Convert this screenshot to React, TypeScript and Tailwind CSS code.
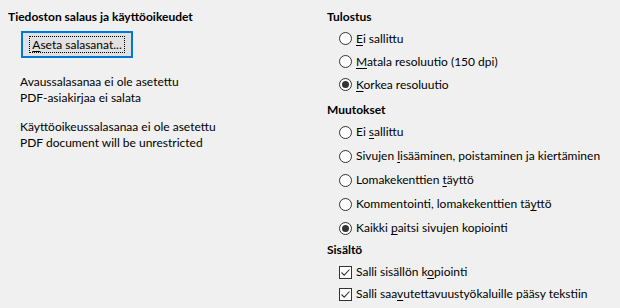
import type { ReactNode } from "react";

const font = { fontFamily: 'Lato, "Segoe UI", Arial, sans-serif' };

function U({ children }: { children: ReactNode }) {
  return <span className="underline underline-offset-2">{children}</span>;
}

function Radio({ checked, children, h = "h-[24px]" }: { checked?: boolean; children: ReactNode; h?: string }) {
  return (
    <div className={`flex items-center ${h} pl-[12px]`}>
      <span className="flex h-[13px] w-[13px] shrink-0 items-center justify-center rounded-full border border-[#333333] bg-white">
        {checked && <span className="h-[7px] w-[7px] rounded-full bg-[#333333]" />}
      </span>
      <span className="ml-[4px] whitespace-nowrap">{children}</span>
    </div>
  );
}

function Check({ children }: { children: ReactNode }) {
  return (
    <div className="flex h-[22px] items-center pl-[12px]">
      <span className="flex h-[13px] w-[13px] shrink-0 items-center justify-center border border-[#333333] bg-white">
        <svg width="11" height="11" viewBox="0 0 11 11">
          <path d="M1.5 5.5 L4.2 8.2 L9.5 2.5" fill="none" stroke="#333333" strokeWidth="1.1" />
        </svg>
      </span>
      <span className="ml-[4px] whitespace-nowrap">{children}</span>
    </div>
  );
}

export default function App() {
  return (
    <div className="h-[308px] w-[620px] overflow-hidden bg-[#f0f0f0] text-[12px] leading-[16px] text-black" style={font}>
      <div className="flex pt-[9px]">
        {/* left: encryption */}
        <div className="w-[327px] shrink-0 pl-[8px]">
          <div className="font-bold">Tiedoston salaus ja käyttöoikeudet</div>
          <div className="ml-[13px] mt-[6px] flex h-[27px] w-[112px] items-center justify-center border-2 border-[#0078d7] bg-[#e1e1e1]">
            <span className="border border-dotted border-black px-[2px] leading-[15px]">
              <U>A</U>seta salasanat...
            </span>
          </div>
          <div className="mt-[16px] pl-[12px]">
            <div>Avaussalasanaa ei ole asetettu</div>
            <div>PDF-asiakirjaa ei salata</div>
            <div className="mt-[13px]">Käyttöoikeussalasanaa ei ole asetettu</div>
            <div>PDF document will be unrestricted</div>
          </div>
        </div>

        {/* right: permissions */}
        <div className="flex-1">
          <div className="font-bold">Tulostus</div>
          <div className="mt-[2px]">
            <Radio h="h-[23px]"><U>E</U>i sallittu</Radio>
            <Radio h="h-[23px]"><U>M</U>atala resoluutio (150 dpi)</Radio>
            <Radio h="h-[23px]" checked><U>K</U>orkea resoluutio</Radio>
          </div>
          <div className="mt-[6px] font-bold">Muutokset</div>
          <div className="mt-[2px]">
            <Radio>Ei <U>s</U>allittu</Radio>
            <Radio>Sivujen <U>l</U>isääminen, poistaminen ja kiertäminen</Radio>
            <Radio>Lomakekenttien <U>t</U>äyttö</Radio>
            <Radio>Kommentointi, lomakekenttien tä<U>y</U>ttö</Radio>
            <Radio checked>Kaikki <U>p</U>aitsi sivujen kopiointi</Radio>
          </div>
          <div className="mt-[2px] font-bold">Sisältö</div>
          <div className="mt-[3px]">
            <Check>Salli sisällön k<U>o</U>piointi</Check>
            <Check>Salli saa<U>v</U>utettavuustyökaluille pääsy tekstiin</Check>
          </div>
        </div>
      </div>
    </div>
  );
}
